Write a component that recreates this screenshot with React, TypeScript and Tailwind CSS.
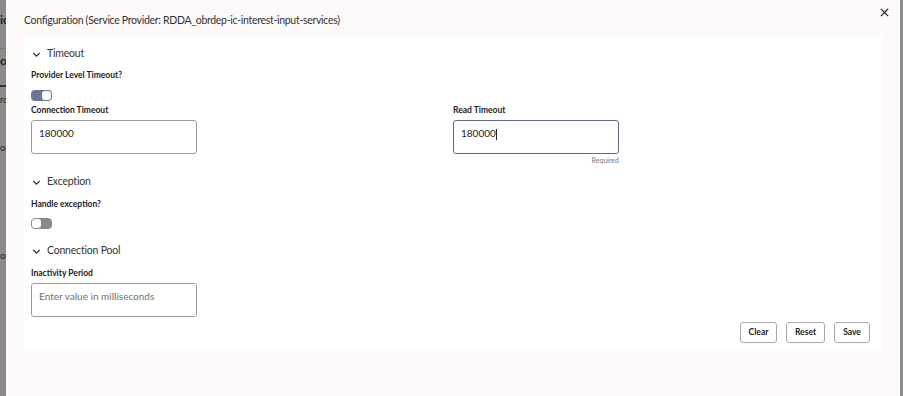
import React from "react";

const Chevron = () => (
  <svg viewBox="0 0 10 10" className="w-[9px] h-[9px]" fill="none" stroke="#333" strokeWidth={1.4}>
    <path d="M1.5 3.3 5 6.8 8.5 3.3" />
  </svg>
);

const Section = ({ title, className = "" }: { title: string; className?: string }) => (
  <div className={`flex items-center h-[20px] gap-[6px] pl-[1px] text-[10.5px] tracking-[-0.2px] text-[#333] ${className}`}>
    <Chevron />
    <span>{title}</span>
  </div>
);

const Label = ({ text, className = "" }: { text: string; className?: string }) => (
  <div className={`h-[14px] leading-[14px] text-[8.5px] font-bold text-[#222] ${className}`}>{text}</div>
);

const Toggle = ({ on }: { on?: boolean }) =>
  on ? (
    <div className="w-[21px] h-[11px] rounded-[4px] bg-[#6b7693] flex items-center justify-end pr-[1px]">
      <div className="w-[9px] h-[9px] rounded-[3px] bg-white" />
    </div>
  ) : (
    <div className="w-[21px] h-[11px] rounded-[4px] bg-[#8a8a8a] border border-[#8a8a8a] flex items-center">
      <div className="w-[9px] h-[9px] rounded-[3px] bg-white" />
    </div>
  );

const Field = ({ value, placeholder, focused }: { value?: string; placeholder?: string; focused?: boolean }) => (
  <div
    className={`w-[166px] h-[34px] rounded-[3px] bg-white px-[7px] pt-[5px] text-[10px] leading-[14px] ${
      focused ? "border-[1.5px] border-[#5f6b86]" : "border border-[#9a9a9a]"
    }`}
  >
    {value ? (
      <span className="text-[#222]">
        {value}
        {focused && <span className="inline-block w-px h-[11px] bg-[#222] align-middle" />}
      </span>
    ) : (
      <span className="text-[#6f6f6f]">{placeholder}</span>
    )}
  </div>
);

const Btn = ({ text, w }: { text: string; w: string }) => (
  <button className={`${w} h-[21px] rounded-[3px] border border-[#a9a9a9] bg-white text-[8.5px] font-bold text-[#222]`}>
    {text}
  </button>
);

export default function App() {
  return (
    <div className="flex w-[903px] h-[396px] overflow-hidden bg-[#8b8b8b] font-['Lato',sans-serif]">
      {/* page behind the dialog */}
      <div className="w-[6px] flex flex-col text-[9px] font-bold text-[#222] leading-none overflow-hidden whitespace-nowrap">
        <div className="h-[14px]" />
        <div className="text-[12px] h-[34px]">ic</div>
        <div className="h-px bg-[#777]" />
        <div className="text-[12px] h-[36px] pt-[6px]">os</div>
        <div className="h-[2px] bg-[#333]" />
        <div className="h-[36px] pt-[8px] font-normal">ro</div>
        <div className="h-[48px] pt-[20px] font-normal">or</div>
        <div className="h-[60px]" />
        <div className="h-[48px] pt-[20px] font-normal">or</div>
      </div>

      {/* dialog */}
      <div className="w-[894px] bg-[#fcf9f8] flex flex-col">
        <div className="h-[36px] flex justify-between pl-[18px] pr-[11px]">
          <div className="pt-[13px] text-[10.5px] tracking-[-0.3px] text-[#333] leading-[14px]">
            Configuration (Service Provider: RDDA_obrdep-ic-interest-input-services)
          </div>
          <svg viewBox="0 0 10 10" className="w-[9px] h-[9px] mt-[8px]" stroke="#222" strokeWidth={1.4}>
            <path d="M1 1 9 9M9 1 1 9" />
          </svg>
        </div>

        <div className="mx-[18px] bg-white h-[313px] px-[7px] pt-[8px]">
          <Section title="Timeout" />
          <Label text="Provider Level Timeout?" className="mt-[4px]" />
          <div className="mt-[8px]">
            <Toggle on />
          </div>
          <div className="grid grid-cols-[422px_1fr] mt-[2px]">
            <div>
              <Label text="Connection Timeout" />
              <div className="mt-[3px]">
                <Field value="180000" />
              </div>
            </div>
            <div>
              <Label text="Read Timeout" />
              <div className="mt-[3px]">
                <Field value="180000" focused />
              </div>
              <div className="w-[166px] text-right text-[7px] text-[#777] leading-[10px] mt-[1px]">Required</div>
            </div>
          </div>

          <Section title="Exception" className="mt-[7px]" />
          <Label text="Handle exception?" className="mt-[5px]" />
          <div className="mt-[7px]">
            <Toggle />
          </div>

          <Section title="Connection Pool" className="mt-[12px]" />
          <Label text="Inactivity Period" className="mt-[5px]" />
          <div className="mt-[3px]">
            <Field placeholder="Enter value in milliseconds" />
          </div>

          <div className="flex justify-end gap-[9px] pr-[5px] mt-[5px]">
            <Btn text="Clear" w="w-[37px]" />
            <Btn text="Reset" w="w-[39px]" />
            <Btn text="Save" w="w-[36px]" />
          </div>
        </div>
      </div>

      <div className="w-[3px]" />
    </div>
  );
}
